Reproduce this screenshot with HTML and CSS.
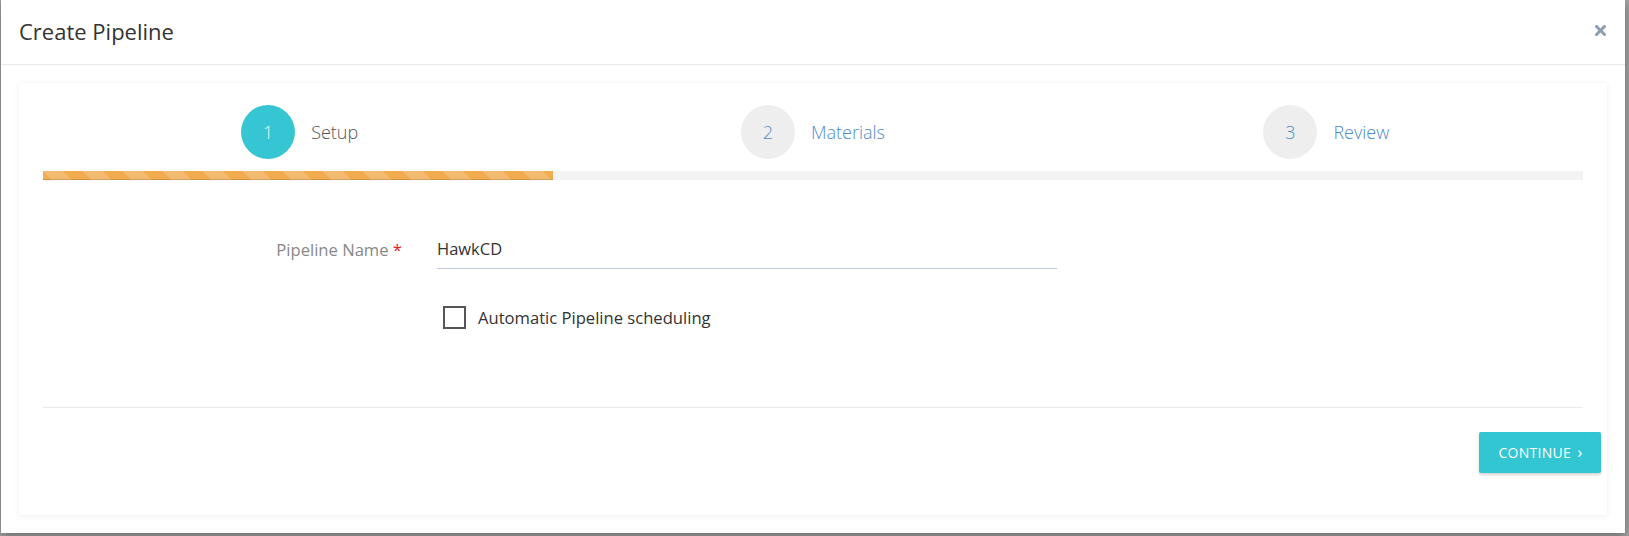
FILE: index.html
```html
<!DOCTYPE html>
<html lang="en">
<head>
<meta charset="utf-8">
<title>Create Pipeline</title>
<link rel="stylesheet" href="styles.css">
</head>
<body>
<div class="backdrop">
  <div class="modal">
    <div class="modal-header">
      <h4 class="modal-title">Create Pipeline</h4>
      <button class="close" aria-label="Close">
        <svg width="11" height="11" viewBox="0 0 11 11"><path d="M1.5 1.5 L9.5 9.5 M9.5 1.5 L1.5 9.5" stroke="#8c9db1" stroke-width="3" stroke-linecap="square" fill="none"/></svg>
      </button>
    </div>
    <div class="modal-body">
      <div class="card">
        <div class="wizard">
          <div class="steps">
            <div class="step active">
              <span class="step-num">1</span>
              <span class="step-title">Setup</span>
            </div>
            <div class="step">
              <span class="step-num">2</span>
              <span class="step-title">Materials</span>
            </div>
            <div class="step">
              <span class="step-num">3</span>
              <span class="step-title">Review</span>
            </div>
          </div>
          <div class="progress">
            <div class="progress-bar" style="width:33.1%"></div>
          </div>
          <div class="form">
            <div class="form-row">
              <label class="form-label">Pipeline Name <span class="required">*</span></label>
              <div class="form-input">HawkCD</div>
            </div>
            <div class="check-row">
              <span class="checkbox"></span>
              <span class="check-label">Automatic Pipeline scheduling</span>
            </div>
          </div>
          <div class="divider"></div>
        </div>
        <div class="actions">
          <button class="btn-continue">CONTINUE <span class="chev">&#8250;</span></button>
        </div>
      </div>
    </div>
  </div>
</div>
</body>
</html>
```
FILE: styles.css
```css
* { box-sizing: border-box; }
html, body {
  margin: 0;
  padding: 0;
}
body {
  width: 1629px;
  height: 536px;
  overflow: hidden;
  background: #a2a2a2;
  font-family: "Open Sans", "Liberation Sans", sans-serif;
}
.backdrop {
  padding-left: 1px;
}
.modal {
  width: 1624px;
  height: 533px;
  background: #fff;
  box-shadow: 0 3px 9px rgba(0,0,0,0.35);
}
.modal-header {
  height: 65px;
  border-bottom: 1px solid #e9e9e9;
  display: flex;
  align-items: center;
  justify-content: space-between;
  padding: 0 19px 0 18px;
}
.modal-title {
  margin: 0;
  font-size: 22px;
  font-weight: 400;
  color: #333;
  line-height: 1;
  padding-bottom: 2px;
}
.close {
  border: 0;
  background: none;
  padding: 0;
  width: 11px;
  height: 11px;
  display: flex;
  margin-bottom: 4px;
}
.modal-body {
  padding: 18px;
}
.card {
  height: 432px;
  background: #fff;
  box-shadow: 0 1px 6px rgba(0,0,0,0.07);
  padding: 22px 6px 0 24px;
}
.wizard {
  margin-right: 18px;
}
.steps {
  display: grid;
  grid-template-columns: 1fr 1fr 1fr;
}
.step {
  display: flex;
  align-items: center;
  justify-content: center;
  gap: 16px;
}
.step-num {
  width: 54px;
  height: 54px;
  border-radius: 50%;
  background: #eeeeee;
  color: #4d8dcc;
  display: flex;
  align-items: center;
  justify-content: center;
  font-size: 18px;
  font-weight: 300;
}
.step-title {
  font-size: 18px;
  font-weight: 300;
  color: #4d8dcc;
}
.step.active .step-num {
  background: #36c6d3;
  color: #e6f9fb;
}
.step.active .step-title {
  color: #555;
}
.progress {
  margin-top: 12px;
  height: 9px;
  background: #f3f3f3;
}
.progress-bar {
  height: 100%;
  background-color: #f0ac4f;
  background-image: linear-gradient(45deg, rgba(255,255,255,.18) 25%, transparent 25%, transparent 50%, rgba(255,255,255,.18) 50%, rgba(255,255,255,.18) 75%, transparent 75%, transparent);
  background-size: 40px 40px;
  box-shadow: inset 0 -1px 0 rgba(0,0,0,.15);
}
.form {
  padding-top: 54px;
}
.form-row {
  display: flex;
  align-items: center;
}
.form-label {
  width: 359px;
  text-align: right;
  font-size: 16.6px;
  color: #888;
  margin-right: 35px;
  padding-bottom: 4px;
}
.required {
  color: #e02222;
}
.form-input {
  width: 620px;
  height: 35px;
  border-bottom: 1px solid #c2cad8;
  font-size: 16.5px;
  color: #333;
  display: flex;
  align-items: center;
  padding-bottom: 5px;
}
.check-row {
  display: flex;
  align-items: center;
  margin-top: 37px;
  margin-left: 400px;
  gap: 12px;
}
.checkbox {
  width: 23px;
  height: 23px;
  border: 2px solid #555;
  display: block;
}
.check-label {
  font-size: 16.6px;
  color: #333;
}
.divider {
  margin-top: 78px;
  height: 1px;
  background: #eaeaea;
}
.actions {
  display: flex;
  justify-content: flex-end;
  margin-top: 24px;
}
.btn-continue {
  width: 122px;
  height: 41px;
  border: 0;
  border-radius: 2px;
  background: #32c5d2;
  color: #fff;
  font-family: "Open Sans", "Liberation Sans", sans-serif;
  font-size: 14px;
  font-weight: 500;
  letter-spacing: 0.3px;
  padding: 0 0 0 1px;
  box-shadow: 0 2px 3px rgba(0,0,0,0.18);
  display: flex;
  align-items: center;
  justify-content: center;
  gap: 6px;
}
.chev {
  font-size: 17px;
  line-height: 1;
  margin-top: -2px;
}
```
